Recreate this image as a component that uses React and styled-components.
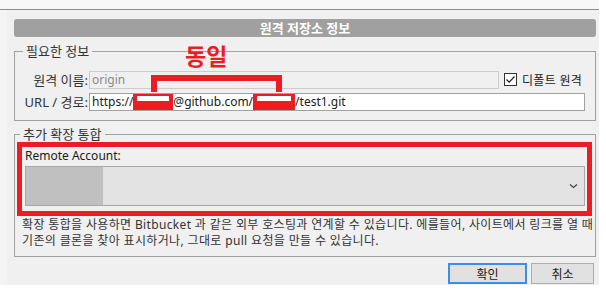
import React from 'react';
import styled, { createGlobalStyle } from 'styled-components';

const GlobalStyle = createGlobalStyle`
  html, body {
    margin: 0;
    padding: 0;
    background: #ffffff;
  }
  body {
    font-family: "Noto Sans", "Noto Sans CJK KR", sans-serif;
    font-size: 12px;
    color: #1a1a1a;
  }
`;

const Screen = styled.div`
  position: relative;
  width: 606px;
  height: 294px;
  overflow: hidden;
  background: #ffffff;
`;

const TopStrip = styled.div`
  height: 9px;
  width: 599px;
  background: #f7f7f7;
  border-bottom: 1px solid #8c8c8c;
`;

const Body = styled.div`
  display: flex;
  height: 275px;
`;

const SideStrip = styled.div`
  width: 7px;
  background: #f4f4f4;
`;

const Dialog = styled.div`
  width: 592px;
  box-sizing: border-box;
  background: #f0f0f0;
  padding: 9px 3px 0 7px;
  display: flex;
  flex-direction: column;
`;

const TitleBar = styled.div`
  height: 18px;
  border-radius: 3px;
  background: #a0a0a0;
  color: #ffffff;
  font-weight: 700;
  font-size: 13px;
  line-height: 18px;
  text-align: center;
`;

const Group = styled.fieldset`
  margin: ${p => p.$top}px 0 0 0;
  padding: ${p => p.$pad};
  border: 1px solid #a0a0a0;
  min-width: 0;
`;

const Legend = styled.legend`
  padding: 0 3px;
  margin-left: 3px;
  font-size: 13px;
  line-height: 16px;
  color: #333333;
`;

const FormGrid = styled.div`
  display: grid;
  grid-template-columns: 68px 1fr;
  column-gap: 1px;
  row-gap: 3px;
  align-items: center;
`;

const Label = styled.span`
  text-align: right;
  font-size: 13px;
  color: #333333;
  white-space: nowrap;
`;

const Row = styled.div`
  display: flex;
  align-items: center;
  gap: 5px;
`;

const TextBox = styled.div`
  box-sizing: border-box;
  height: 18px;
  width: ${p => (p.$width ? `${p.$width}px` : 'auto')};
  flex: ${p => (p.$width ? 'none' : '1')};
  border: 1px solid ${p => (p.$disabled ? '#cccccc' : '#a0a0a0')};
  background: ${p => (p.$disabled ? '#f0f0f0' : '#ffffff')};
  color: ${p => (p.$disabled ? '#8a8a8a' : '#1a1a1a')};
  padding: 0 2px;
  font-size: 12px;
  line-height: 16px;
  white-space: nowrap;
  overflow: hidden;
`;

const Redact = styled.span`
  display: inline-block;
  box-sizing: border-box;
  vertical-align: top;
  width: ${p => p.$w}px;
  height: 17px;
  margin-top: -1px;
  background: #ed1c24;
  padding: 3px 4px 0 4px;
  &::after {
    content: '';
    display: block;
    height: 5px;
    background: #ffffff;
  }
`;

const CheckLabel = styled.label`
  display: flex;
  align-items: center;
  gap: 5px;
  font-size: 12px;
  letter-spacing: 0.3px;
  color: #1a1a1a;
  white-space: nowrap;
`;

const CheckBox = styled.span`
  box-sizing: border-box;
  width: 13px;
  height: 13px;
  border: 1px solid #333333;
  background: #ffffff;
  display: flex;
  align-items: center;
  justify-content: center;
`;

const Highlight = styled.div`
  border: 5px solid #ed1c24;
  padding: 1px 2px 5px 3px;
`;

const FieldCaption = styled.div`
  font-size: 12px;
  line-height: 16px;
  color: #1a1a1a;
  margin-bottom: 2px;
`;

const Select = styled.div`
  box-sizing: border-box;
  height: 40px;
  border: 1px solid #a8a8a8;
  background: #e3e3e3;
  display: flex;
  align-items: stretch;
  justify-content: space-between;
`;

const Avatar = styled.div`
  width: 77px;
  background: #c0c0c0;
`;

const Chevron = styled.div`
  display: flex;
  align-items: center;
  padding-right: 6px;
`;

const Help = styled.div`
  padding: 1px 0 0 5px;
  font-size: 12px;
  line-height: 16px;
  letter-spacing: 0.35px;
  color: #333333;
  white-space: nowrap;
`;

const Buttons = styled.div`
  display: flex;
  justify-content: flex-end;
  gap: 4px;
  margin-top: 6px;
  padding-right: 2px;
`;

const Button = styled.button`
  box-sizing: border-box;
  width: ${p => p.$w}px;
  height: 21px;
  margin: 0;
  padding: 0;
  background: #e1e1e1;
  border: ${p => (p.$primary ? '2px solid #3c8fe0' : '1px solid #adadad')};
  font-family: "Noto Sans", "Noto Sans CJK KR", sans-serif;
  font-size: 12px;
  color: #1a1a1a;
`;

const SameMark = styled.div`
  position: absolute;
  left: 185px;
  top: 42px;
  font-size: 23px;
  font-weight: 700;
  line-height: 28px;
  color: #ed1c24;
`;

const Bracket = styled.svg`
  position: absolute;
  left: 0;
  top: 0;
  pointer-events: none;
`;

export default function App() {
  return (
    <>
      <GlobalStyle />
      <Screen>
        <TopStrip />
        <Body>
          <SideStrip />
          <Dialog>
            <TitleBar>원격 저장소 정보</TitleBar>

            <Group $top={6} $pad="11px 10px 9px 5px">
              <Legend>필요한 정보</Legend>
              <FormGrid>
                <Label>원격 이름:</Label>
                <Row>
                  <TextBox $width={410} $disabled>origin</TextBox>
                  <CheckLabel>
                    <CheckBox>
                      <svg width="11" height="11" viewBox="0 0 11 11">
                        <polyline points="1.5,5.5 4.2,8.2 9.5,2.5" fill="none" stroke="#222" strokeWidth="1.2" />
                      </svg>
                    </CheckBox>
                    디폴트 원격
                  </CheckLabel>
                </Row>
                <Label>URL / 경로:</Label>
                <TextBox>
                  https://<Redact $w={40} />@github.com/<Redact $w={42} />/test1.git
                </TextBox>
              </FormGrid>
            </Group>

            <Group $top={5} $pad="0 3px 7px 2px">
              <Legend>추가 확장 통합</Legend>
              <Highlight>
                <FieldCaption>Remote Account:</FieldCaption>
                <Select>
                  <Avatar />
                  <Chevron>
                    <svg width="9" height="6" viewBox="0 0 9 6">
                      <polyline points="1,1.5 4.5,4.5 8,1.5" fill="none" stroke="#444" strokeWidth="1.2" />
                    </svg>
                  </Chevron>
                </Select>
              </Highlight>
              <Help>
                <div>확장 통합을 사용하면 Bitbucket 과 같은 외부 호스팅과 연계할 수 있습니다. 에를들어, 사이트에서 링크를 열 때</div>
                <div>기존의 클론을 찾아 표시하거나, 그대로 pull 요청을 만들 수 있습니다.</div>
              </Help>
            </Group>

            <Buttons>
              <Button $primary $w={79}>확인</Button>
              <Button $w={63}>취소</Button>
            </Buttons>
          </Dialog>
        </Body>

        <SameMark>동일</SameMark>
        <Bracket width="606" height="294" viewBox="0 0 606 294">
          <polyline points="154,92 154,78 279,78 279,92" fill="none" stroke="#ed1c24" strokeWidth="6" />
        </Bracket>
      </Screen>
    </>
  );
}
